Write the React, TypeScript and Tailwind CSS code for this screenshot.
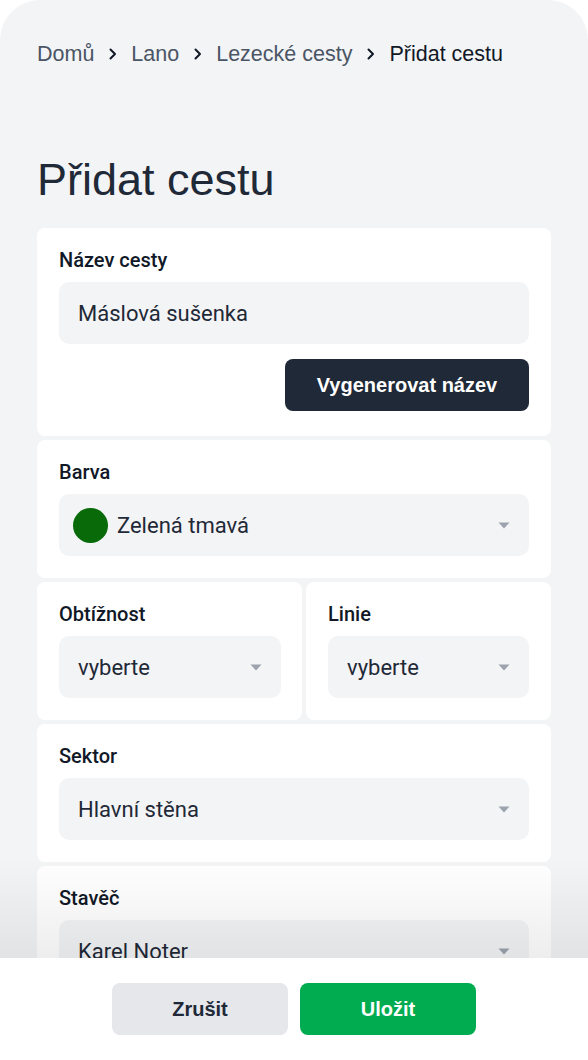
import React from 'react';

function Chevron() {
  return (
    <svg width="8" height="12" viewBox="0 0 8 12" className="ml-[15px] mr-[14px] shrink-0" fill="none">
      <path d="M1.5 1.5 6 6l-4.5 4.5" stroke="#111827" strokeWidth="2" strokeLinecap="round" strokeLinejoin="round" />
    </svg>
  );
}

function Caret() {
  return (
    <svg width="12" height="7" viewBox="0 0 12 7" className="shrink-0">
      <path d="M0.5 0.5h11L6 6.5z" fill="#9ca3af" />
    </svg>
  );
}

function Card({ children, className = '' }: { children: React.ReactNode; className?: string }) {
  return <div className={`bg-white rounded-lg px-[22px] pt-5 pb-[22px] ${className}`}>{children}</div>;
}

function Label({ children }: { children: React.ReactNode }) {
  return <div className="text-[20px] leading-6 font-medium text-[#111827] mb-[10px]">{children}</div>;
}

function Select({ value, dot }: { value: string; dot?: string }) {
  return (
    <div className="h-[62px] rounded-[10px] bg-gray-100 flex items-center pl-[19px] pr-[19px]">
      {dot && <span className="w-[35px] h-[35px] rounded-full mr-[9px] -ml-[5px] shrink-0" style={{ backgroundColor: dot }} />}
      <span className="flex-1 text-[22px] text-[#1f2937] truncate">{value}</span>
      <Caret />
    </div>
  );
}

const arial = { fontFamily: '"Liberation Sans", Arial, sans-serif' };

export default function App() {
  const crumbs = ['Domů', 'Lano', 'Lezecké cesty'];

  return (
    <div className="bg-white w-[588px] h-[1060px] overflow-hidden relative" style={{ fontFamily: 'Roboto, "Noto Sans", sans-serif' }}>
      <div className="bg-gray-100 rounded-t-[40px] h-full px-[37px]">
        {/* Breadcrumb */}
        <nav className="flex items-center pt-[40px] h-[68px] text-[21.5px] text-gray-600" style={arial}>
          {crumbs.map((c) => (
            <React.Fragment key={c}>
              <span>{c}</span>
              <Chevron />
            </React.Fragment>
          ))}
          <span className="text-[#111827]">Přidat cestu</span>
        </nav>

        <h1 className="mt-[84px] text-[45px] leading-[56px] text-[#1f2937]" style={arial}>
          Přidat cestu
        </h1>

        <div className="mt-[20px] flex flex-col gap-1">
          <Card className="pb-[25px]">
            <Label>Název cesty</Label>
            <div className="h-[62px] rounded-[10px] bg-gray-100 flex items-center px-[19px] text-[22px] text-[#1f2937]">
              Máslová sušenka
            </div>
            <div className="flex justify-end mt-[15px]">
              <button className="h-[52px] w-[244px] rounded-lg bg-[#1f2937] text-white text-[20px] font-bold" style={arial}>
                Vygenerovat název
              </button>
            </div>
          </Card>

          <Card>
            <Label>Barva</Label>
            <Select value="Zelená tmavá" dot="#086a08" />
          </Card>

          <div className="grid grid-cols-[265px_1fr] gap-1">
            <Card className="pr-[21px]">
              <Label>Obtížnost</Label>
              <Select value="vyberte" />
            </Card>
            <Card>
              <Label>Linie</Label>
              <Select value="vyberte" />
            </Card>
          </div>

          <Card>
            <Label>Sektor</Label>
            <Select value="Hlavní stěna" />
          </Card>

          <Card>
            <Label>Stavěč</Label>
            <Select value="Karel Noter" />
          </Card>
        </div>
      </div>

      {/* Footer */}
      <div className="absolute left-0 right-0 bottom-0 h-[102px] bg-white flex justify-center gap-3 pt-[25px]">
        <div className="absolute left-0 right-0 bottom-full h-[100px] bg-gradient-to-b from-transparent to-black/[0.07] pointer-events-none" />
        <button className="w-[176px] h-[52px] rounded-lg bg-gray-200 text-[#1f2937] text-[20px] font-bold" style={arial}>Zrušit</button>
        <button className="w-[176px] h-[52px] rounded-lg bg-[#00ac4f] text-white text-[20px] font-bold" style={arial}>Uložit</button>
      </div>
    </div>
  );
}
